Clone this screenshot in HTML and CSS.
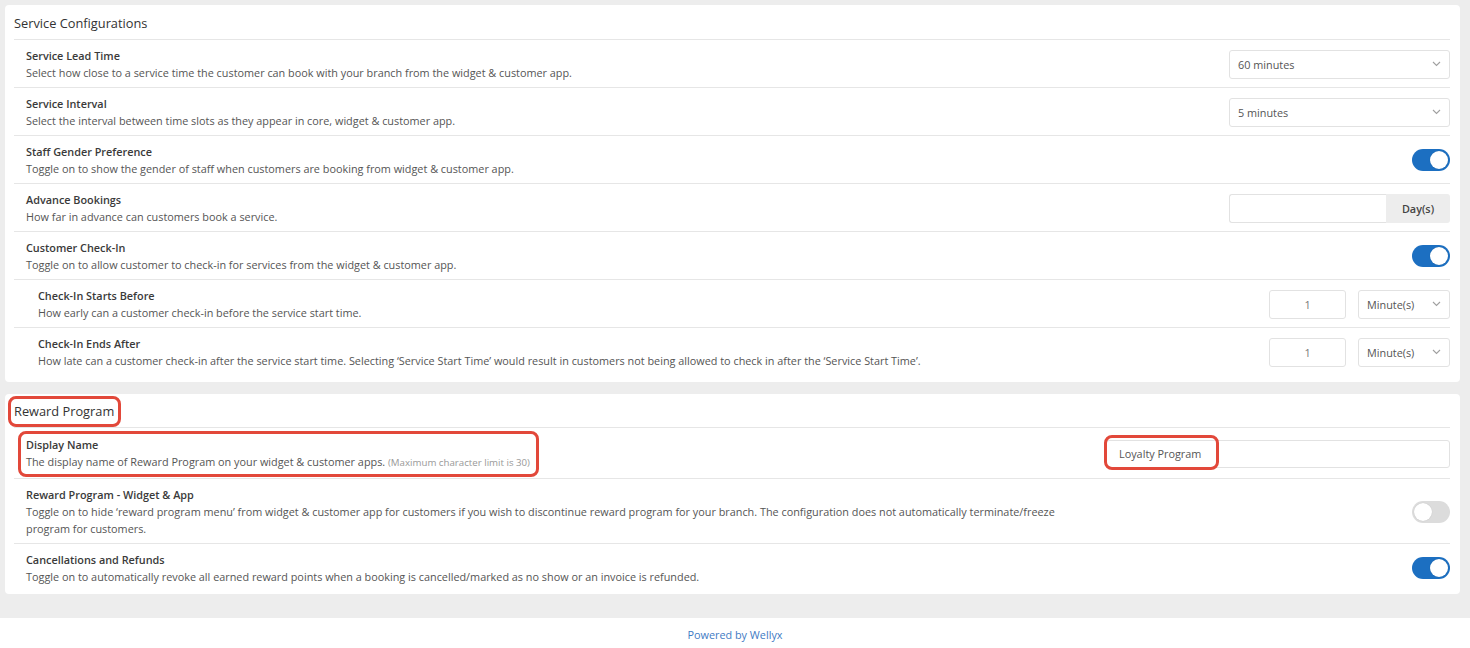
FILE: index.html
```html
<!DOCTYPE html>
<html lang="en">
<head>
  <meta charset="UTF-8" />
  <meta name="viewport" content="width=device-width, initial-scale=1.0"/>
  <title>Branch Settings</title>
  <link rel="stylesheet" href="styles.css">
</head>
<body>

  <main class="pagina">

    <!-- Service configurations -->
    <section class="tarjeta">
      <div class="tarjeta-titulo">Service Configurations</div>

      <div class="fila">
        <div class="info">
          <div class="etiqueta">Service Lead Time</div>
          <div class="desc">Select how close to a service time the customer can book with your branch from the widget &amp; customer app.</div>
        </div>
        <div class="control">
          <div class="select ancho">
            <span>60 minutes</span>
            <svg class="chevron" width="9" height="6" viewBox="0 0 9 6"><path d="M1 1l3.5 3.5L8 1" fill="none" stroke="#a0a0a0" stroke-width="1.1"/></svg>
          </div>
        </div>
      </div>

      <div class="fila">
        <div class="info">
          <div class="etiqueta">Service Interval</div>
          <div class="desc">Select the interval between time slots as they appear in core, widget &amp; customer app.</div>
        </div>
        <div class="control">
          <div class="select ancho">
            <span>5 minutes</span>
            <svg class="chevron" width="9" height="6" viewBox="0 0 9 6"><path d="M1 1l3.5 3.5L8 1" fill="none" stroke="#a0a0a0" stroke-width="1.1"/></svg>
          </div>
        </div>
      </div>

      <div class="fila">
        <div class="info">
          <div class="etiqueta">Staff Gender Preference</div>
          <div class="desc">Toggle on to show the gender of staff when customers are booking from widget &amp; customer app.</div>
        </div>
        <div class="control">
          <span class="switch on"><span class="perilla"></span></span>
        </div>
      </div>

      <div class="fila">
        <div class="info">
          <div class="etiqueta">Advance Bookings</div>
          <div class="desc">How far in advance can customers book a service.</div>
        </div>
        <div class="control">
          <div class="grupo ancho">
            <input type="text" class="campo" value="">
            <span class="addon">Day(s)</span>
          </div>
        </div>
      </div>

      <div class="fila">
        <div class="info">
          <div class="etiqueta">Customer Check-In</div>
          <div class="desc">Toggle on to allow customer to check-in for services from the widget &amp; customer app.</div>
        </div>
        <div class="control">
          <span class="switch on"><span class="perilla"></span></span>
        </div>
      </div>

      <div class="fila sub">
        <div class="info">
          <div class="etiqueta">Check-In Starts Before</div>
          <div class="desc">How early can a customer check-in before the service start time.</div>
        </div>
        <div class="control">
          <input type="text" class="campo numero" value="1">
          <div class="select corto">
            <span>Minute(s)</span>
            <svg class="chevron" width="9" height="6" viewBox="0 0 9 6"><path d="M1 1l3.5 3.5L8 1" fill="none" stroke="#a0a0a0" stroke-width="1.1"/></svg>
          </div>
        </div>
      </div>

      <div class="fila sub">
        <div class="info ancha">
          <div class="etiqueta">Check-In Ends After</div>
          <div class="desc">How late can a customer check-in after the service start time. Selecting ‘Service Start Time’ would result in customers not being allowed to check in after the ‘Service Start Time’.</div>
        </div>
        <div class="control">
          <input type="text" class="campo numero" value="1">
          <div class="select corto">
            <span>Minute(s)</span>
            <svg class="chevron" width="9" height="6" viewBox="0 0 9 6"><path d="M1 1l3.5 3.5L8 1" fill="none" stroke="#a0a0a0" stroke-width="1.1"/></svg>
          </div>
        </div>
      </div>
    </section>

    <!-- Reward program -->
    <section class="tarjeta ultima">
      <div class="tarjeta-titulo corto"><span class="marca marca-titulo">Reward Program</span></div>

      <div class="fila fila-nombre">
        <div class="info marca marca-info">
          <div class="etiqueta">Display Name</div>
          <div class="desc">The display name of Reward Program on your widget &amp; customer apps. <span class="nota">(Maximum character limit is 30)</span></div>
        </div>
        <div class="control">
          <div class="marca marca-campo">
            <input type="text" class="campo nombre" value="Loyalty Program">
          </div>
        </div>
      </div>

      <div class="fila">
        <div class="info">
          <div class="etiqueta">Reward Program - Widget &amp; App</div>
          <div class="desc">Toggle on to hide ‘reward program menu’ from widget &amp; customer app for customers if you wish to discontinue reward program for your branch. The configuration does not automatically terminate/freeze program for customers.</div>
        </div>
        <div class="control">
          <span class="switch"><span class="perilla"></span></span>
        </div>
      </div>

      <div class="fila">
        <div class="info">
          <div class="etiqueta">Cancellations and Refunds</div>
          <div class="desc">Toggle on to automatically revoke all earned reward points when a booking is cancelled/marked as no show or an invoice is refunded.</div>
        </div>
        <div class="control">
          <span class="switch on"><span class="perilla"></span></span>
        </div>
      </div>
    </section>

  </main>

  <footer class="pie">Powered by Wellyx</footer>

</body>
</html>
```

FILE: styles.css
```css
/* --------- Base --------- */
body { margin:0; font-family:"Open Sans", "Noto Sans", Arial, sans-serif; background:#fff; color:#333 }
.pagina { background:#ededed; padding:5px 10px 24px 5px }

/* --------- Tarjetas --------- */
.tarjeta { background:#fff; border-radius:4px; padding:0 10px 7px 9px; margin-bottom:12px }
.tarjeta.ultima { margin-bottom:0; padding-bottom:3px }
.tarjeta-titulo {
  height:34px; display:flex; align-items:center; padding-top:1px; box-sizing:border-box;
  font-size:12.8px; color:#333
}
.tarjeta-titulo.corto { height:33px }

/* Filas */
.fila {
  display:flex; align-items:center; justify-content:space-between;
  border-top:1px solid #e6e6e6; padding:7px 0 6px 12px
}
.fila.sub { padding-left:24px }
.fila-nombre { padding-top:8px; padding-bottom:7px }
.info { max-width:1045px }
.info.ancha { max-width:none }
.etiqueta { font-size:10.85px; font-weight:600; line-height:17px; color:#3a3a3a }
.desc { font-size:10.85px; line-height:17px; color:#555 }
.fila .desc:nth-child(2):not(:only-child) { }
.nota { font-size:9.7px; color:#999 }

/* Controles */
.control { display:flex; align-items:center; gap:12px; flex-shrink:0 }
.select {
  display:flex; align-items:center; justify-content:space-between;
  box-sizing:border-box; height:29px; padding:0 8px;
  border:1px solid #e2e2e2; border-radius:3px;
  font-size:10.85px; color:#555; background:#fff
}
.select.ancho { width:221px }
.select.corto { width:92px }
.grupo { display:flex; height:29px; box-sizing:border-box }
.grupo.ancho { width:221px }
.campo {
  box-sizing:border-box; height:29px; border:1px solid #e2e2e2; border-radius:3px;
  font-family:inherit; font-size:10.85px; color:#555; padding:0 12px; margin:0; outline:none
}
.grupo .campo { flex:1; width:0; border-radius:3px 0 0 3px; border-right:none }
.addon {
  width:64px; display:flex; align-items:center; justify-content:center;
  background:#ededed; border-radius:0 3px 3px 0;
  font-size:10.85px; font-weight:600; color:#444
}
.campo.numero { width:77px; text-align:center; color:#777 }
.campo.nombre { width:344px; height:28px; display:block }

/* Switch */
.switch {
  display:inline-flex; align-items:center; box-sizing:border-box;
  width:38px; height:22px; border-radius:11px; padding:2px;
  background:#dcdcdc
}
.perilla { width:18px; height:18px; border-radius:50%; background:#fff; box-shadow:0 0 1px rgba(0,0,0,.2) }
.switch.on { background:#1c6fc1; justify-content:flex-end }

/* --------- Marcas rojas --------- */
.marca { position:relative }
.marca::after {
  content:''; position:absolute; pointer-events:none;
  border:3px solid #e2483a; border-radius:8px
}
.marca-titulo::after { left:-6px; right:-7px; top:-6px; bottom:-7px }
.marca-info::after { left:-8px; right:-9px; top:-5px; bottom:-6px }
.marca-campo::after { left:-2px; top:-5px; width:109px; height:29px }

/* --------- Pie --------- */
.pie { text-align:center; font-size:10.85px; color:#3f7bc4; padding:9px 0 8px }
```
